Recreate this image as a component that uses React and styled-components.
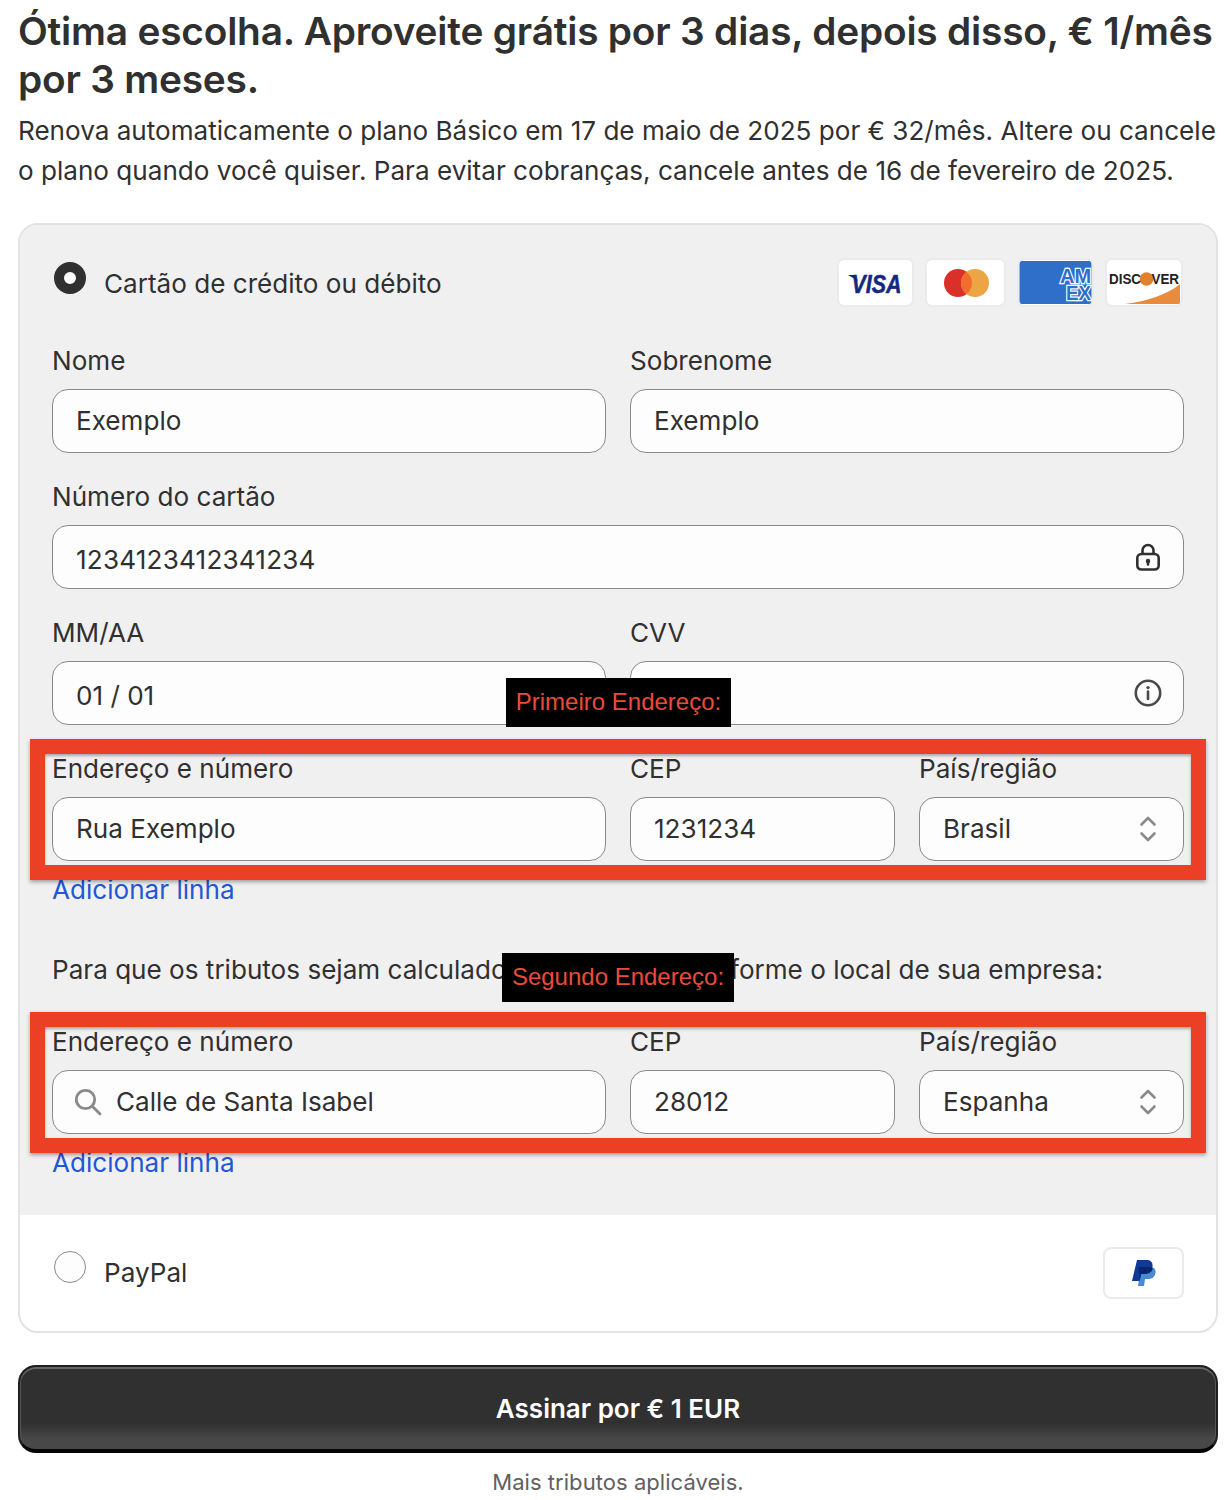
import React from 'react';
import styled, { createGlobalStyle } from 'styled-components';

const Global = createGlobalStyle`
  html, body { margin: 0; padding: 0; background: #fff; }
  body { font-family: Inter, "Noto Sans", sans-serif; color: #303030; }
`;

const Page = styled.div`
  position: relative;
  width: 1232px;
  height: 1500px;
  box-sizing: border-box;
  padding: 7px 14px 0 18px;
  overflow: hidden;
`;

const Title = styled.h1`
  margin: 0;
  font-size: 38.8px;
  line-height: 48px;
  font-weight: 600;
  letter-spacing: -0.2px;
`;

const Intro = styled.p`
  margin: 8px 0 0;
  font-size: 26.1px;
  line-height: 40px;
  white-space: nowrap;
`;

const Card = styled.div`
  margin-top: 32px;
  border: 2px solid #e3e3e3;
  border-radius: 20px;
  overflow: hidden;
  background: #fff;
`;

const CardSection = styled.div`
  background: #f0f0f0;
  padding: 34px 32px 34px;
`;

const MethodRow = styled.div`
  display: flex;
  align-items: flex-start;
  justify-content: space-between;
`;

const MethodLabel = styled.div`
  display: flex;
  gap: 18px;
  font-size: 26.1px;
  line-height: 36px;
  padding-top: ${p => p.$pad}px;
`;

const Radio = styled.span`
  width: 32px;
  height: 32px;
  margin: -4px 0 0 2px;
  box-sizing: border-box;
  border-radius: 50%;
  background: ${p => (p.$on ? '#fff' : '#fdfdfd')};
  border: ${p => (p.$on ? '10px solid #303030' : '1px solid #8a8a8a')};
`;

const Logos = styled.div`
  display: flex;
  gap: 11px;
  margin: -1px 1px 0 0;
`;

const CardLogo = styled.div`
  width: ${p => p.$w}px;
  height: 49px;
  box-sizing: border-box;
  border: 2px solid #ebebeb;
  border-radius: 7px;
  background: #fff;
  overflow: hidden;
  svg { display: block; width: 100%; height: 100%; }
`;

const Fields = styled.div`
  display: grid;
  grid-template-columns: repeat(2, 1fr);
  column-gap: 24px;
  row-gap: 26px;
  margin-top: 36px;
`;

const AddressGrid = styled.div`
  grid-column: 1 / -1;
  display: grid;
  grid-template-columns: 554px 265px 265px;
  column-gap: 24px;
`;

const Field = styled.div`
  grid-column: ${p => (p.$full ? '1 / -1' : 'auto')};
`;

const Label = styled.div`
  font-size: 26.1px;
  line-height: 36px;
  margin-bottom: 10px;
`;

const InputBox = styled.div`
  display: flex;
  align-items: center;
  gap: 12px;
  height: 64px;
  box-sizing: border-box;
  padding: 0 22px 0 23px;
  background: #fdfdfd;
  border: 1px solid #8a8a8a;
  border-radius: 16px;
  font-size: 26.1px;
  svg { flex: none; }
`;

const InputText = styled.span`
  flex: 1;
  position: relative;
  top: ${p => p.$shift ?? -1}px;
  letter-spacing: ${p => (p.$digits ? '0.2px' : 'normal')};
`;

const AddLine = styled.a`
  display: block;
  margin-top: 11px;
  font-size: 26.1px;
  line-height: 36px;
  color: #2257d6;
`;

const Notice = styled.p`
  margin: 44px 0 36px;
  font-size: 26.1px;
  line-height: 36px;
`;

const PaypalRow = styled.div`
  display: flex;
  align-items: flex-start;
  justify-content: space-between;
  height: 116px;
  padding: 32px 32px 0;
  box-sizing: border-box;
`;

const PaypalLogo = styled.div`
  width: 81px;
  height: 52px;
  box-sizing: border-box;
  border: 2px solid #ebebeb;
  border-radius: 8px;
  display: flex;
  align-items: center;
  justify-content: center;
`;

const SubmitButton = styled.button`
  display: block;
  width: 100%;
  height: 88px;
  margin-top: 32px;
  padding: 0;
  font-family: inherit;
  font-size: 26px;
  font-weight: 600;
  color: #fff;
  border: 2px solid #1f1f1f;
  border-bottom: 4px solid #050505;
  border-radius: 18px;
  background: linear-gradient(#303030 0%, #303030 68%, #484848 88%, #484848 100%);
  box-shadow: inset 0 2px 0 #666, inset 1px 0 0 #555, inset -1px 0 0 #555;
`;

const Footnote = styled.div`
  margin-top: 13px;
  text-align: center;
  font-size: 22px;
  line-height: 32px;
  color: #616161;
  letter-spacing: 0.05px;
`;

// the red marks lie over the form, they are annotations on the screenshot
const Highlight = styled.div`
  position: absolute;
  left: 30px;
  top: ${p => p.$top}px;
  width: 1176px;
  height: 141px;
  box-sizing: border-box;
  border: 15px solid #eb4026;
  box-shadow: 0 2px 4px rgba(0, 0, 0, 0.35), inset 0 2px 3px rgba(0, 0, 0, 0.3);
`;

const Tag = styled.div`
  position: absolute;
  left: ${p => p.$left}px;
  top: ${p => p.$top}px;
  width: ${p => p.$w}px;
  height: 49px;
  background: #000;
  color: #eb4b3a;
  font-family: "Liberation Sans", Arial, sans-serif;
  font-size: 24px;
  line-height: 47px;
  text-align: center;
  white-space: nowrap;
`;

const LockIcon = () => (
  <svg width="26" height="28" viewBox="0 0 26 28" fill="none" stroke="#303030" strokeWidth="2.6">
    <path d="M7.500 11V7.500a5.500 5.500 0 0 1 11 0V11" />
    <rect x="2.300" y="11" width="21.400" height="15.500" rx="4" />
    <circle cx="13" cy="18" r="2.200" fill="#303030" stroke="none" />
    <path d="M13 18v3.500" strokeLinecap="round" />
  </svg>
);

const InfoGlyph = styled.svg`
  margin-right: -1px;
`;

const InfoIcon = () => (
  <InfoGlyph width="28" height="28" viewBox="0 0 28 28" fill="none" stroke="#4a4a4a" strokeWidth="2.6">
    <circle cx="14" cy="14" r="12.200" />
    <circle cx="14" cy="8.600" r="1.700" fill="#4a4a4a" stroke="none" />
    <path d="M14 12.600v7.400" strokeLinecap="round" />
  </InfoGlyph>
);

const SelectGlyph = styled.svg`
  margin-right: 4px;
`;

const SelectIcon = () => (
  <SelectGlyph width="18" height="28" viewBox="0 0 18 28" fill="none" stroke="#8a8a8a" strokeWidth="2.6" strokeLinecap="round" strokeLinejoin="round">
    <path d="M2.500 9.500 9 3l6.500 6.500" />
    <path d="M2.500 18.500 9 25l6.500-6.500" />
  </SelectGlyph>
);

const SearchGlyph = styled.svg`
  margin: 0 2px 0 -2px;
`;

const SearchIcon = () => (
  <SearchGlyph width="28" height="28" viewBox="0 0 28 28" fill="none" stroke="#8a8a8a" strokeWidth="2.800" strokeLinecap="round">
    <circle cx="11.500" cy="11.500" r="9.200" />
    <path d="M18.500 18.500 26 26" />
  </SearchGlyph>
);

const VisaLogo = () => (
  <CardLogo $w={77}>
    <svg viewBox="0 0 73 45">
      <path d="M9 15h7l3 6z" fill="#14287f" />
      <text x="12.500" y="33" fontFamily="Liberation Sans" fontStyle="italic" fontWeight="700" fontSize="26" fill="#14287f" stroke="#14287f" strokeWidth="0.5" textLength="50" lengthAdjust="spacingAndGlyphs">VISA</text>
    </svg>
  </CardLogo>
);

const MasterLogo = () => (
  <CardLogo $w={81}>
    <svg viewBox="0 0 77 45">
      <circle cx="31" cy="23" r="14" fill="#db2f2a" />
      <circle cx="48" cy="23" r="14" fill="#eca542" />
      <path d="M39.500 11.900A14 14 0 0 1 39.500 34.100 14 14 0 0 1 39.500 11.900z" fill="#f16d2e" />
    </svg>
  </CardLogo>
);

const AmexLogo = () => (
  <CardLogo $w={77}>
    <svg viewBox="0 0 73 45">
      <rect x="0.500" y="1" width="72" height="43" rx="2" fill="#306fc9" />
      <text x="41" y="23" fontFamily="Liberation Sans" fontWeight="700" fontSize="21" fill="#306fc9" stroke="#fff" strokeWidth="2.4" paintOrder="stroke" textLength="31" lengthAdjust="spacingAndGlyphs">AM</text>
      <text x="47" y="40" fontFamily="Liberation Sans" fontWeight="700" fontSize="20" fill="#306fc9" stroke="#fff" strokeWidth="2.4" paintOrder="stroke" textLength="25" lengthAdjust="spacingAndGlyphs">EX</text>
    </svg>
  </CardLogo>
);

const DiscoverLogo = () => (
  <CardLogo $w={78}>
    <svg viewBox="0 0 74 45">
      <path d="M18 44C40 41 60 35 73 24v20z" fill="#e98b3c" />
      <circle cx="39.500" cy="19" r="6.800" fill="#e0812e" />
      <text x="2" y="24" fontFamily="Liberation Sans" fontWeight="700" fontSize="15" fill="#222" textLength="70" lengthAdjust="spacingAndGlyphs">DISC<tspan fill="#e0812e">O</tspan>VER</text>
    </svg>
  </CardLogo>
);

const PaypalMark = () => (
  <svg width="24" height="27" viewBox="0 0 24 27">
    <path d="M9 7h9c4 0 6 2 5.500 5.500C23 17 20 19 16 19h-3l-1 7H6z" fill="#4a8ad0" />
    <path d="M5 0h9c5 0 7 2.500 6.500 6.500C20 11 16.500 14 12 14H9l-1.300 7H0z" fill="#0f3a96" />
    <path d="M6.500 7H18c2 .6 2.800 1.500 2.600 2.600C19.500 12.500 16 14 12 14H9l-1 5.500z" fill="#0a2470" />
  </svg>
);

const App = () => (
  <Page>
    <Global />
    <Title>Ótima escolha. Aproveite grátis por 3 dias, depois disso, € 1/mês por 3 meses.</Title>
    <Intro>
      Renova automaticamente o plano Básico em 17 de maio de 2025 por € 32/mês. Altere ou cancele<br />
      o plano quando você quiser. Para evitar cobranças, cancele antes de 16 de fevereiro de 2025.
    </Intro>
    <Card>
      <CardSection>
        <MethodRow>
          <MethodLabel $pad={7}><Radio $on />Cartão de crédito ou débito</MethodLabel>
          <Logos>
            <VisaLogo />
            <MasterLogo />
            <AmexLogo />
            <DiscoverLogo />
          </Logos>
        </MethodRow>
        <Fields>
          <Field>
            <Label>Nome</Label>
            <InputBox><InputText>Exemplo</InputText></InputBox>
          </Field>
          <Field>
            <Label>Sobrenome</Label>
            <InputBox><InputText>Exemplo</InputText></InputBox>
          </Field>
          <Field $full>
            <Label>Número do cartão</Label>
            <InputBox><InputText $shift={2} $digits>1234123412341234</InputText><LockIcon /></InputBox>
          </Field>
          <Field>
            <Label>MM/AA</Label>
            <InputBox><InputText $shift={2}>01 / 01</InputText></InputBox>
          </Field>
          <Field>
            <Label>CVV</Label>
            <InputBox><InputText />
              <InfoIcon /></InputBox>
          </Field>
          <AddressGrid>
            <Field>
              <Label>Endereço e número</Label>
              <InputBox><InputText>Rua Exemplo</InputText></InputBox>
            </Field>
            <Field>
              <Label>CEP</Label>
              <InputBox><InputText>1231234</InputText></InputBox>
            </Field>
            <Field>
              <Label>País/região</Label>
              <InputBox><InputText>Brasil</InputText><SelectIcon /></InputBox>
            </Field>
          </AddressGrid>
        </Fields>
        <AddLine>Adicionar linha</AddLine>
        <Notice>Para que os tributos sejam calculados corretamente, informe o local de sua empresa:</Notice>
        <AddressGrid>
          <Field>
            <Label>Endereço e número</Label>
            <InputBox><SearchIcon /><InputText>Calle de Santa Isabel</InputText></InputBox>
          </Field>
          <Field>
            <Label>CEP</Label>
            <InputBox><InputText>28012</InputText></InputBox>
          </Field>
          <Field>
            <Label>País/região</Label>
            <InputBox><InputText>Espanha</InputText><SelectIcon /></InputBox>
          </Field>
        </AddressGrid>
        <AddLine>Adicionar linha</AddLine>
      </CardSection>
      <PaypalRow>
        <MethodLabel $pad={8}><Radio />PayPal</MethodLabel>
        <PaypalLogo><PaypalMark /></PaypalLogo>
      </PaypalRow>
    </Card>
    <SubmitButton>Assinar por € 1 EUR</SubmitButton>
    <Footnote>Mais tributos aplicáveis.</Footnote>

    <Highlight $top={739} />
    <Highlight $top={1012} />
    <Tag $left={506} $top={678} $w={225}>Primeiro Endereço:</Tag>
    <Tag $left={502} $top={953} $w={232}>Segundo Endereço:</Tag>
  </Page>
);

export default App;
